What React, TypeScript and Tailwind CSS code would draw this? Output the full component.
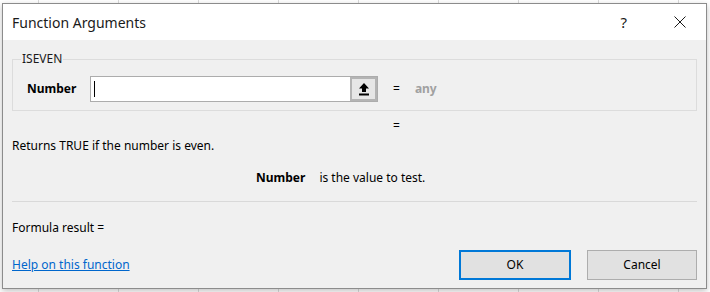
export default function App() {
    return (
        <div className="w-[710px] h-[292px] overflow-hidden bg-white bg-[linear-gradient(to_right,#dadada_1px,transparent_1px)] bg-[size:80px_120px] bg-[position:38px_0] pt-[3px] pl-[2px] font-['Noto_Sans',sans-serif] text-[12px] text-[#000]">
            <div className="w-[705px] h-[286px] border border-[#8c8c8c] bg-[#f0f0f0] flex flex-col shadow-[0_2px_6px_rgba(0,0,0,0.25)]">
                {/* title bar */}
                <div className="h-[36px] bg-white flex items-center pl-[9px] pr-[20px]">
                    <span className="text-[14px] text-[#1a1a1a]">Function Arguments</span>
                    <span className="ml-auto text-[15px] text-[#1a1a1a]">?</span>
                    <svg className="ml-[47px]" width="12" height="12" viewBox="0 0 12 12">
                        <path d="M0.5 0.5 L11.5 11.5 M11.5 0.5 L0.5 11.5" stroke="#1a1a1a" strokeWidth="1" />
                    </svg>
                </div>

                <div className="px-[9px] flex flex-col flex-1">
                    <fieldset className="block mt-[13px] h-[58px] border border-[#dcdcdc] px-[14px]">
                        <legend className="ml-[-6px] px-[1px] text-[12px] leading-[12px] text-[#1a1a1a]">ISEVEN</legend>
                        <div className="flex items-center mt-[11px] h-[26px]">
                            <span className="font-bold w-[63px]">Number</span>
                            <div className="flex w-[288px] h-[26px] border border-[#acacac] bg-white">
                                <div className="flex-1 flex items-center pl-[3px]">
                                    <div className="w-[1px] h-[16px] bg-black" />
                                </div>
                                <div className="w-[27px] h-[24px] border-[2px] border-[#b4b4b4] bg-[#e6e6e6] flex items-center justify-center">
                                    <svg width="12" height="14" viewBox="0 0 12 14">
                                        <path d="M6 1 L11 6.5 L8 6.5 L8 10 L4 10 L4 6.5 L1 6.5 Z" fill="#000" />
                                        <rect x="1" y="11.5" width="10" height="2" fill="#000" />
                                    </svg>
                                </div>
                            </div>
                            <span className="ml-[15px]">=</span>
                            <span className="ml-[15px] font-bold text-[#a0a0a0]">any</span>
                        </div>
                    </fieldset>

                    <div className="mt-[5px] h-[22px] leading-[20px] pl-[381px]">=</div>

                    <div className="h-[16px] leading-[16px]">Returns TRUE if the number is even.</div>

                    <div className="h-[47px] flex items-center pl-[244px]">
                        <span className="font-bold">Number</span>
                        <span className="ml-[14px]">is the value to test.</span>
                    </div>

                    <div className="h-[1px] bg-[#d9d9d9]" />

                    <div className="h-[48px] pt-[4px] flex items-center">Formula result =</div>

                    <div className="flex items-center">
                        <a href="#" className="text-[#0066cc] underline">Help on this function</a>
                        <button className="ml-auto w-[112px] h-[30px] border-[2px] border-[#0078d7] bg-[#e1e1e1]">OK</button>
                        <button className="ml-[16px] w-[110px] h-[30px] border border-[#adadad] bg-[#e1e1e1]">Cancel</button>
                    </div>
                </div>
            </div>
        </div>
    )
}
